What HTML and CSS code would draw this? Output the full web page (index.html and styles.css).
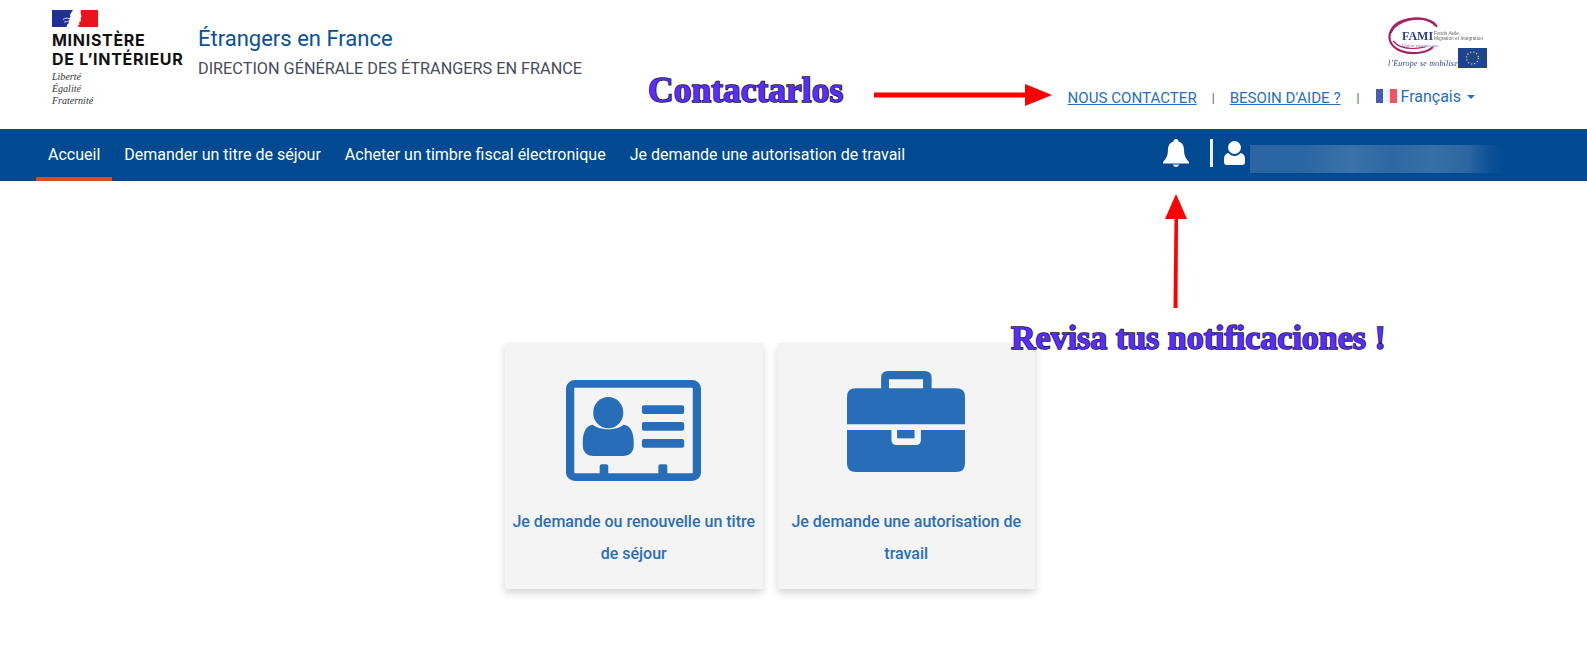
FILE: index.html
```html
<!DOCTYPE html>
<html lang="fr">
<head>
<meta charset="utf-8">
<title>Étrangers en France</title>
<link rel="stylesheet" href="styles.css">
</head>
<body>
<div class="page">
  <header class="top">
    <div class="brand">
      <svg class="brand-flag" viewBox="0 0 46 17" aria-hidden="true">
        <path fill="#1f2f95" d="M0 0h21l-2 3-1 2 .5 2-1.500 1.500.5 1.500-1 1 .5 2-1.500 1-1 3H0z"/>
        <path fill="#e9151d" d="M29 0h17v17H27l-1.500-1 2-1.500-.5-2 2-1.500-.5-3 1-1.500-1-3.500z"/>
        <path fill="none" stroke="#dfe3f2" stroke-width="1" d="M11 9.500c2-1.500 4-1.500 6-1M12 12c2 0 3-.5 4.500-1"/>
      </svg>
      <div class="brand-name">MINISTÈRE<br>DE L’INTÉRIEUR</div>
      <div class="brand-motto">Liberté<br>Égalité<br>Fraternité</div>
    </div>
    <div class="titles">
      <div class="site-title">Étrangers en France</div>
      <div class="site-sub">DIRECTION GÉNÉRALE DES ÉTRANGERS EN FRANCE</div>
    </div>
    <div class="top-right">
      <svg class="fami" viewBox="0 0 100 54" aria-hidden="true">
        <g fill="none" stroke="#a62263">
          <path stroke-width="2.200" d="M48 10C42 2 26 0 14 5 3 9-1 20 3 27c4 7 14 11 26 10 7-.5 13-3 16-6"/>
          <path stroke-width="1.500" d="M3 17C6 8 20 2 34 3c8 .5 14 4 15 8"/>
          <path stroke-width="1.200" d="M5 25c6 7 18 9 32 6"/>
        </g>
        <text class="fami-name" x="14" y="24">FAMI</text>
        <text class="fami-small" x="46" y="18.500">Fonds Asile,</text>
        <text class="fami-small" x="46" y="23.500">Migration et Intégration</text>
        <text class="fami-union" x="14" y="31">Union européenne</text>
        <text class="fami-slogan" x="0" y="50">l’Europe se mobilise</text>
        <rect x="70" y="32" width="29" height="20" fill="#1d4493"/>
        <circle cx="84.500" cy="42" r="6" fill="none" stroke="#e8d44a" stroke-width="1.300" stroke-dasharray="1.200 1.940"/>
      </svg>
      <nav class="links">
        <a class="link" href="#">NOUS CONTACTER</a>
        <span class="sep">|</span>
        <a class="link" href="#">BESOIN D'AIDE ?</a>
        <span class="sep sep-last">|</span>
        <span class="lang">
          <span class="lang-flag"><i class="lf-blue"></i><i class="lf-white"></i><i class="lf-red"></i></span>
          Français
          <span class="caret"></span>
        </span>
      </nav>
    </div>
  </header>

  <nav class="bar">
    <a class="bar-item is-active" href="#">Accueil</a>
    <a class="bar-item" href="#">Demander un titre de séjour</a>
    <a class="bar-item" href="#">Acheter un timbre fiscal électronique</a>
    <a class="bar-item" href="#">Je demande une autorisation de travail</a>
    <div class="bar-right">
      <svg class="bell" viewBox="0 0 26 28" aria-hidden="true"><path fill="#fff" d="M13 0c1.500 0 2.500 1 2.500 2.400 3.800 1 5.500 4.300 5.500 8.100 0 6 1.800 9 5 12.500v1.500H0V23c3.200-3.500 5-6.500 5-12.500 0-3.800 1.700-7.100 5.500-8.100C10.500 1 11.500 0 13 0z"/><path fill="#dfe6ef" d="M10 25.500h6c0 1.400-1.300 2.500-3 2.500s-3-1.100-3-2.500z"/></svg>
      <span class="bar-div"></span>
      <svg class="user" viewBox="0 0 21 24" aria-hidden="true"><circle fill="#fff" cx="10.500" cy="6.500" r="6.500"/><path fill="#fff" d="M4.500 12c1.500 2 3.500 3 6 3s4.500-1 6-3c3 .5 4.500 3 4.500 6v3c0 2-1 3-3 3H3c-2 0-3-1-3-3v-3c0-3 1.500-5.500 4.500-6z"/></svg>
      <span class="masked"></span>
    </div>
  </nav>

  <main class="cards">
    <a class="card" href="#">
      <svg class="card-icon icon-id" viewBox="0 0 377 303" preserveAspectRatio="none" aria-hidden="true">
        <rect x="11.500" y="11.500" width="354" height="280" rx="14" fill="none" stroke="#276db8" stroke-width="23"/>
        <ellipse cx="118" cy="98" rx="42" ry="47" fill="#276db8"/>
        <path fill="#276db8" d="M75 134c20 18 66 18 86 0 18 2 28 22 28 50v14c0 18-12 30-30 30H77c-18 0-30-12-30-30v-14c0-28 10-48 28-50z"/>
        <rect x="212" y="76" width="118" height="26" rx="6" fill="#276db8"/>
        <rect x="212" y="126" width="118" height="26" rx="6" fill="#276db8"/>
        <rect x="212" y="177" width="118" height="26" rx="6" fill="#276db8"/>
        <path fill="#276db8" d="M94 285v-26q0-6 6-6h12q6 0 6 6v26zM258 285v-26q0-6 6-6h13q6 0 6 6v26z"/>
      </svg>
      <span class="card-text">Je demande ou renouvelle un titre de séjour</span>
    </a>
    <a class="card" href="#">
      <svg class="card-icon icon-case" viewBox="0 0 332 303" preserveAspectRatio="none" aria-hidden="true">
        <path fill="#276db8" fill-rule="evenodd" d="M96 60V20Q96 0 116 0h102q20 0 20 20v40h-24V25h-96v35z"/>
        <path fill="#276db8" d="M0 160V77q0-25 25-25h282q25 0 25 25v83z"/>
        <path fill="#276db8" d="M0 177h125v30q0 15 15 15h53q15 0 15-15v-30h124v101q0 25-25 25H25q-25 0-25-25z"/>
        <rect x="141" y="177" width="49" height="25" fill="#276db8"/>
      </svg>
      <span class="card-text">Je demande une autorisation de travail</span>
    </a>
  </main>

  <div class="note note-contact">Contactarlos</div>
  <svg class="arrow arrow-right" viewBox="0 0 178 24" aria-hidden="true"><path fill="#f00" d="M0 9.500h151V1l27 11-27 11v-8.500H0z"/></svg>
  <svg class="arrow arrow-up" viewBox="0 0 24 114" aria-hidden="true"><path fill="#f00" d="M12 0l11 25h-9l-.5 89H9.500l1-89H1z"/></svg>
  <div class="note note-bell">Revisa tus notificaciones !</div>
</div>
</body>
</html>
```
FILE: styles.css
```css
* { box-sizing: border-box; }
html, body { margin: 0; padding: 0; background: #fff; }
body { font-family: Roboto, "Liberation Sans", sans-serif; overflow: hidden; }
a { text-decoration: none; color: inherit; }

.page { position: relative; width: 1587px; height: 663px; overflow: hidden; }

/* header */
.top { display: flex; height: 129px; padding-left: 52px; }
.brand { width: 146px; padding-top: 10px; }
.brand-flag { display: block; width: 46px; height: 17px; }
.brand-name {
  margin-top: 4px;
  font: 700 16px/18.500px Inter, "Liberation Sans", sans-serif;
  letter-spacing: .7px;
  color: #111;
  white-space: nowrap;
}
.brand-motto {
  margin-top: 3px;
  font: italic 10px/12px "Liberation Serif", serif;
  color: #333;
}
.titles { padding-top: 24px; }
.site-title { font-size: 22px; line-height: 29px; color: #0a4f98; }
.site-sub { margin-top: 6px; font-size: 16.250px; line-height: 20px; color: #474b5a; white-space: nowrap; }

.top-right {
  margin-left: auto;
  margin-right: 99px;
  padding-top: 16px;
  display: flex;
  flex-direction: column;
  align-items: flex-end;
}
.fami { display: block; width: 100px; height: 54px; filter: blur(.3px); }
.fami-name { font: 700 12px "Liberation Serif", serif; fill: #2b3f8f; }
.fami-small { font: 4.800px "Liberation Sans", sans-serif; fill: #666; }
.fami-union { font: 5px "Liberation Serif", serif; fill: #6a6fa8; }
.fami-slogan { font: italic 8px "Liberation Serif", serif; letter-spacing: .2px; fill: #2b3f8f; }

.links {
  margin-top: 18px;
  margin-right: 13px;
  display: flex;
  align-items: center;
  height: 20px;
  font-size: 15.100px;
  color: #2a6ebb;
  white-space: nowrap;
}
.link { text-decoration: underline; }
.sep { margin: 0 15px; color: #555; font-size: 12px; }
.sep-last { margin: 0 17px 0 16px; }
.lang { display: flex; align-items: center; font-size: 16px; position: relative; top: -2px; }
.lang-flag { display: flex; width: 20px; height: 14px; margin-right: 4px; }
.lang-flag i { flex: 1; }
.lf-blue { background: #4a5cb0; }
.lf-white { background: #f2f2f8; }
.lf-red { background: #f05465; }
.caret {
  margin-left: 6px;
  margin-top: 2px;
  width: 0;
  height: 0;
  border-left: 4px solid transparent;
  border-right: 4px solid transparent;
  border-top: 4px solid #2a6ebb;
}

/* nav bar */
.bar {
  display: flex;
  height: 52px;
  padding-left: 36px;
  background: #014a92;
  color: #fff;
  font-size: 16px;
}
.bar-item {
  display: flex;
  align-items: center;
  height: 52px;
  padding: 3px 12px 0;
  white-space: nowrap;
  border-bottom: 4px solid transparent;
}
.bar-item.is-active { border-bottom-color: #e04a1f; }
.bar-right { margin-left: auto; display: flex; align-items: flex-start; padding-right: 82px; }
.bell { width: 26px; height: 28px; margin-top: 10px; }
.bar-div { width: 3px; height: 28px; margin: 10px 0 0 21px; background: #eceff3; }
.user { width: 21px; height: 24px; margin: 12px 0 0 11px; }
.masked {
  width: 255px;
  height: 28px;
  margin: 16px 0 0 5px;
  background: linear-gradient(90deg, #2b66a3 0%, #2a66a3 20%, #3a72aa 40%, #2d68a4 55%, #3570a8 72%, #2c67a3 85%, #0c5096 94%, #014a92 100%);
}

/* cards */
.cards { display: flex; gap: 15px; padding: 162px 0 0 505px; }
.card {
  width: 257.500px;
  height: 246px;
  display: flex;
  flex-direction: column;
  align-items: center;
  background: #f4f4f4;
  box-shadow: 0 4px 8px rgba(0, 0, 0, .17);
  color: #2a6ebb;
  text-align: center;
}
.card-icon { display: block; height: 101px; flex: none; }
.icon-id { width: 135px; margin-top: 37px; }
.icon-case { width: 118px; margin-top: 28px; }
.card-text {
  padding: 0 6px;
  font-size: 16px;
  font-weight: 500;
  line-height: 32px;
}
.icon-id + .card-text { margin-top: 25px; }
.icon-case + .card-text { margin-top: 34px; padding: 0 12px; }

/* annotations laid over the screenshot */
.note {
  position: absolute;
  font-family: "Liberation Serif", serif;
  font-weight: 700;
  color: #5a2dff;
  -webkit-text-stroke: 1.500px #15152e;
  paint-order: stroke fill;
  white-space: nowrap;
}
.note-contact { left: 648px; top: 70px; font-size: 35.500px; line-height: 40px; }
.note-bell { left: 1011px; top: 320px; font-size: 34px; line-height: 36px; }
.arrow { position: absolute; display: block; }
.arrow-right { left: 874px; top: 83px; width: 178px; height: 24px; }
.arrow-up { left: 1164px; top: 194px; width: 24px; height: 114px; }
```
